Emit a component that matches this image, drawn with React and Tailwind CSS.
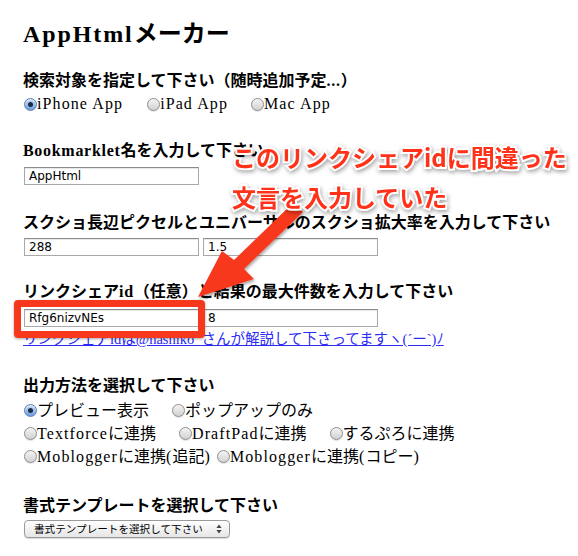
import React from 'react';

const serif = "font-['Liberation_Serif','Noto_Sans_CJK_JP',serif]";
const LATIN = /([A-Za-z0-9@_.()\- ]+)/;

// Hiragino Mincho's latin is wider than Times, so latin runs get some tracking
const Mix = ({ text, track }) => (
    <>
        {text.split(LATIN).map((part, i) =>
            i % 2 === 1 ? <span key={i} className={track}>{part}</span> : part
        )}
    </>
);

const Radio = ({ checked, label, className = '' }) => (
    <span className={`inline-flex items-center ${className}`}>
        {checked ? (
            <span className="w-[13px] h-[13px] rounded-full border border-[#5b7fb5] bg-gradient-to-b from-[#c6dcf5] to-[#6d9ede] flex items-center justify-center shadow-[inset_0_1px_1px_rgba(255,255,255,0.7)]">
                <span className="w-[5px] h-[5px] rounded-full bg-[#1b2c44]" />
            </span>
        ) : (
            <span className="w-[13px] h-[13px] rounded-full border border-[#8e8e8e] bg-gradient-to-b from-[#f4f4f4] to-[#d2d2d2] shadow-[0_1px_1px_rgba(0,0,0,0.12)]" />
        )}
        <span className="whitespace-nowrap">
            <Mix text={label} track="tracking-[1.1px]" />
        </span>
    </span>
);

const Field = ({ value }) => (
    <div className="w-[175px] h-[18px] border border-[#a9a9a9] border-t-[#8c8c8c] bg-white shadow-[inset_0_1px_1px_rgba(0,0,0,0.1)] flex items-center pl-[4px] text-[12px] text-black font-['DejaVu_Sans','Liberation_Sans',sans-serif]">
        {value}
    </div>
);

const Heading = ({ text, className = '' }) => (
    <h2 className={`text-[16px] leading-[20px] font-bold whitespace-nowrap ${className}`}>
        <Mix text={text} track="tracking-[0.7px]" />
    </h2>
);

export default function App() {
    return (
        <div className={`relative w-[578px] h-[556px] bg-white overflow-hidden text-black ${serif}`}>
            <div className="pl-[23px] pt-[16px]">
                <h1 className="text-[24px] leading-[36px] font-bold">
                    <span className="tracking-[1.9px]">AppHtml</span>メーカー
                </h1>

                {/* 検索対象 */}
                <Heading className="mt-[19px]" text="検索対象を指定して下さい（随時追加予定...）" />
                <div className="mt-[3px] h-[20px] flex items-center text-[16px] pl-[1px]">
                    <Radio checked label="iPhone App" />
                    <Radio label="iPad App" className="ml-[24px]" />
                    <Radio label="Mac App" className="ml-[23px]" />
                </div>

                {/* Bookmarklet名 */}
                <Heading className="mt-[27px]" text="Bookmarklet名を入力して下さい" />
                <div className="mt-[6px] pl-[1px]">
                    <Field value="AppHtml" />
                </div>

                {/* スクショ */}
                <Heading className="mt-[28px]" text="スクショ長辺ピクセルとユニバーサルのスクショ拡大率を入力して下さい" />
                <div className="mt-[5px] pl-[1px] flex gap-[4px]">
                    <Field value="288" />
                    <Field value="1.5" />
                </div>

                {/* リンクシェアid */}
                <Heading className="mt-[26px]" text="リンクシェアid（任意）と結果の最大件数を入力して下さい" />
                <div className="mt-[7px] pl-[1px] flex gap-[4px]">
                    <Field value="Rfg6nizvNEs" />
                    <Field value="8" />
                </div>
                <a href="#" className="block mt-[4px] text-[14.5px] leading-[16px] text-[#2b2bf5] underline whitespace-nowrap">
                    リンクシェアidは@hashiko_さんが解説して下さってますヽ(´ー`)ﾉ
                </a>

                {/* 出力方法 */}
                <Heading className="mt-[29px]" text="出力方法を選択して下さい" />
                <div className="mt-[3px] text-[16px] pl-[1px]">
                    <div className="h-[23px] flex items-center">
                        <Radio checked label="プレビュー表示" />
                        <Radio label="ポップアップのみ" className="ml-[23px]" />
                    </div>
                    <div className="h-[23px] flex items-center">
                        <Radio label="Textforceに連携" />
                        <Radio label="DraftPadに連携" className="ml-[23px]" />
                        <Radio label="するぷろに連携" className="ml-[23px]" />
                    </div>
                    <div className="h-[23px] flex items-center">
                        <Radio label="Mobloggerに連携(追記)" />
                        <Radio label="Mobloggerに連携(コピー)" className="ml-[6px]" />
                    </div>
                </div>

                {/* 書式テンプレート */}
                <Heading className="mt-[28px]" text="書式テンプレートを選択して下さい" />
                <div className="mt-[4px] ml-[1px] w-[206px] h-[18px] rounded-[4px] border border-[#9a9a9a] bg-gradient-to-b from-white to-[#e6e6e6] shadow-[0_1px_1px_rgba(0,0,0,0.15)] flex items-center justify-between pl-[9px] pr-[7px] text-[10.6px] font-['Noto_Sans_CJK_JP',sans-serif]">
                    <span className="whitespace-nowrap">書式テンプレートを選択して下さい</span>
                    <svg width="6" height="10" viewBox="0 0 6 10" className="shrink-0">
                        <path d="M3 0.5 L5.6 4 H0.4 Z" fill="#444" />
                        <path d="M3 9.5 L5.6 6 H0.4 Z" fill="#444" />
                    </svg>
                </div>
            </div>

            {/* annotation: red frame */}
            <div className="absolute left-[14px] top-[300px] w-[191px] h-[38px] border-[7px] border-[#f7381d] rounded-[4px] shadow-[0_1px_3px_rgba(0,0,0,0.35)]" />

            {/* annotation: arrow */}
            <svg className="absolute left-0 top-0 pointer-events-none" width="578" height="556" viewBox="0 0 578 556">
                <defs>
                    <filter id="sh" x="-20%" y="-20%" width="140%" height="140%">
                        <feDropShadow dx="1" dy="2" stdDeviation="1.5" floodColor="#000" floodOpacity="0.35" />
                    </filter>
                </defs>
                <polygon
                    points="198,297 222,251 234,260 293,203 303,212 244,269 254,279"
                    fill="#f7381d"
                    filter="url(#sh)"
                />
            </svg>

            {/* annotation: text */}
            <div className="absolute left-[232px] top-[137px] text-[24px] leading-[40px] font-bold text-[#ff3219] font-['Noto_Sans_CJK_JP',sans-serif] whitespace-nowrap [paint-order:stroke_fill] [-webkit-text-stroke:4px_white] [filter:drop-shadow(1px_2px_2px_rgba(0,0,0,0.35))]">
                <div>このリンクシェアidに間違った</div>
                <div>文言を入力していた</div>
            </div>
        </div>
    );
}
